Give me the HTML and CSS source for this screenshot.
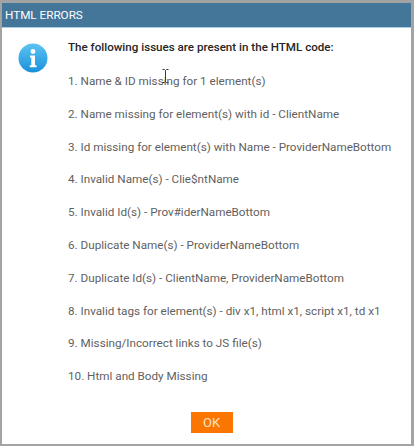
FILE: index.html
```html
<!DOCTYPE html>
<html lang="en">
<head>
    <meta charset="UTF-8">
    <title>HTML Errors</title>
    <link rel="stylesheet" href="styles.css">
</head>
<body>
    <div class="dialog">
        <div class="dialog-title">HTML ERRORS</div>
        <div class="dialog-body">
            <div class="info-icon">
                <svg width="30" height="30" viewBox="0 0 30 30">
                    <defs>
                        <linearGradient id="infoFill" x1="0" y1="0" x2="0" y2="1">
                            <stop offset="0" stop-color="#5cc4f2"/>
                            <stop offset="1" stop-color="#1a90dc"/>
                        </linearGradient>
                    </defs>
                    <circle cx="15" cy="15" r="14.5" fill="url(#infoFill)"/>
                    <circle cx="15" cy="8.5" r="2.4" fill="#fff"/>
                    <path d="M12 12.5h5v9.7h1.6v2h-6.8v-2h1.5v-7.7h-1.3z" fill="#fff"/>
                </svg>
            </div>
            <div class="issues">
                <p class="issues-heading">The following issues are present in the HTML code:</p>
                <p>1. Name &amp; ID missing for 1 element(s)</p>
                <p>2. Name missing for element(s) with id - ClientName</p>
                <p>3. Id missing for element(s) with Name - ProviderNameBottom</p>
                <p>4. Invalid Name(s) - Clie$ntName</p>
                <p>5. Invalid Id(s) - Prov#iderNameBottom</p>
                <p>6. Duplicate Name(s) - ProviderNameBottom</p>
                <p>7. Duplicate Id(s) - ClientName, ProviderNameBottom</p>
                <p>8. Invalid tags for element(s) - div x1, html x1, script x1, td x1</p>
                <p>9. Missing/Incorrect links to JS file(s)</p>
                <p>10. Html and Body Missing</p>
            </div>
        </div>
        <div class="dialog-footer">
            <button type="button" class="ok-btn">OK</button>
        </div>
    </div>
    <svg class="text-cursor" width="7" height="14" viewBox="0 0 7 14">
        <path d="M0.5 0.5h2l1 1 1-1h2M3.5 1.5v11M0.5 13.5h2l1-1 1 1h2" fill="none" stroke="#3a3a3a" stroke-width="1"/>
    </svg>
</body>
</html>
```

FILE: styles.css
```css
* { margin: 0; padding: 0; box-sizing: border-box; }
html, body { height: 100%; }
body {
    background-color: #a3a3a3;
    font-family: Roboto, "Liberation Sans", sans-serif;
    padding: 3px 3px 2px 2px;
}
.dialog {
    height: 100%;
    background-color: #ffffff;
    display: flex;
    flex-direction: column;
}
.dialog-title {
    height: 25px;
    line-height: 24px;
    padding-left: 3px;
    background-color: #44769a;
    border-bottom: 1px solid #a9cde6;
    color: #ffffff;
    font-size: 11.7px;
}
.dialog-body {
    display: flex;
    flex: 1;
    padding: 12px 0 0 16px;
}
.info-icon { width: 30px; height: 30px; margin-top: 3px; }
.issues { margin-left: 20px; }
.issues p {
    font-size: 11.7px;
    line-height: 14px;
    color: #5f5f5f;
    margin-bottom: 18.8px;
    white-space: nowrap;
}
.issues .issues-heading { font-size: 11.6px; color: #262626; font-weight: 500; margin-bottom: 20px; }
.dialog-footer {
    display: flex;
    justify-content: center;
    padding-bottom: 11px;
}
.ok-btn {
    width: 42px;
    height: 21px;
    margin-left: 10px;
    border: none;
    background-color: #fb7600;
    color: #fde3c8;
    font-family: inherit;
    font-size: 13px;
}
.text-cursor { position: absolute; left: 162px; top: 69px; }
```
